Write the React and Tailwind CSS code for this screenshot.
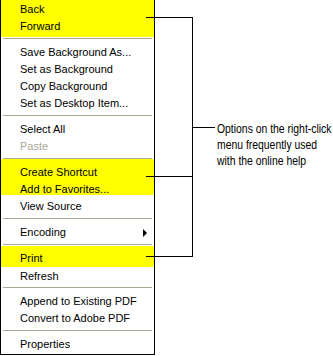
import React from "react";

const menuFont = { fontFamily: '"Liberation Sans", Arial, sans-serif' };

const Item = ({ label, disabled = false, submenu = false }) => (
  <div className="h-[17px] flex items-center pl-[19px] pr-[8px] relative">
    <span
      className={`relative top-[1px] text-[11px] leading-[17px] whitespace-nowrap ${
        disabled ? "text-[#aca899]" : "text-black"
      }`}
    >
      {label}
    </span>
    {submenu && (
      <svg className="absolute left-[142px] top-[6px]" width="5" height="8" viewBox="0 0 5 8">
        <path d="M0 0 L4 4 L0 8 Z" fill="#000" />
      </svg>
    )}
  </div>
);

const Sep = ({ top = 4, bottom = 4 }) => (
  <div style={{ paddingTop: top, paddingBottom: bottom }} className="px-[2px]">
    <div className="h-px bg-[#aca899]" />
  </div>
);

export default function App() {
  return (
    <div className="relative w-[333px] h-[356px] bg-white overflow-hidden flex" style={menuFont}>
      {/* context menu */}
      <div className="w-[155px] shrink-0 h-[355px] border-l border-r border-b border-black bg-white flex flex-col">
        <div className="bg-[#ffff00] h-[37px]">
          <Item label="Back" />
          <Item label="Forward" />
        </div>
        <Sep top={1} bottom={4} />
        <Item label="Save Background As..." />
        <Item label="Set as Background" />
        <Item label="Copy Background" />
        <Item label="Set as Desktop Item..." />
        <Sep />
        <Item label="Select All" />
        <Item label="Paste" disabled />
        <Sep top={4} bottom={0} />
        <div className="bg-[#ffff00] pt-[4px] h-[36px] overflow-visible">
          <Item label="Create Shortcut" />
          <Item label="Add to Favorites..." />
        </div>
        <div className="pt-[2px]">
          <Item label="View Source" />
        </div>
        <Sep />
        <Item label="Encoding" submenu />
        <Sep top={4} bottom={1} />
        <div className="bg-[#ffff00] pt-[3px] pb-[1px]">
          <Item label="Print" />
        </div>
        <Item label="Refresh" />
        <Sep top={3} bottom={4} />
        <Item label="Append to Existing PDF" />
        <Item label="Convert to Adobe PDF" />
        <Sep />
        <Item label="Properties" />
      </div>

      {/* callout text */}
      <div className="ml-[62px] pt-[121px] shrink-0">
        <p className="text-[13px] leading-[16px] text-black whitespace-nowrap origin-left scale-x-[0.8]">
          Options on the right-click
          <br />
          menu frequently used
          <br />
          with the online help
        </p>
      </div>

      {/* bracket lines */}
      <svg className="absolute inset-0 pointer-events-none" width="333" height="356">
        <g stroke="#000" strokeWidth="1" fill="none" shapeRendering="crispEdges">
          <path d="M146 17.5 H192.5 V256.5" />
          <path d="M146 176.5 H192.5" />
          <path d="M146 256.5 H192.5" />
          <path d="M192.5 127.5 H215" />
        </g>
      </svg>
    </div>
  );
}
